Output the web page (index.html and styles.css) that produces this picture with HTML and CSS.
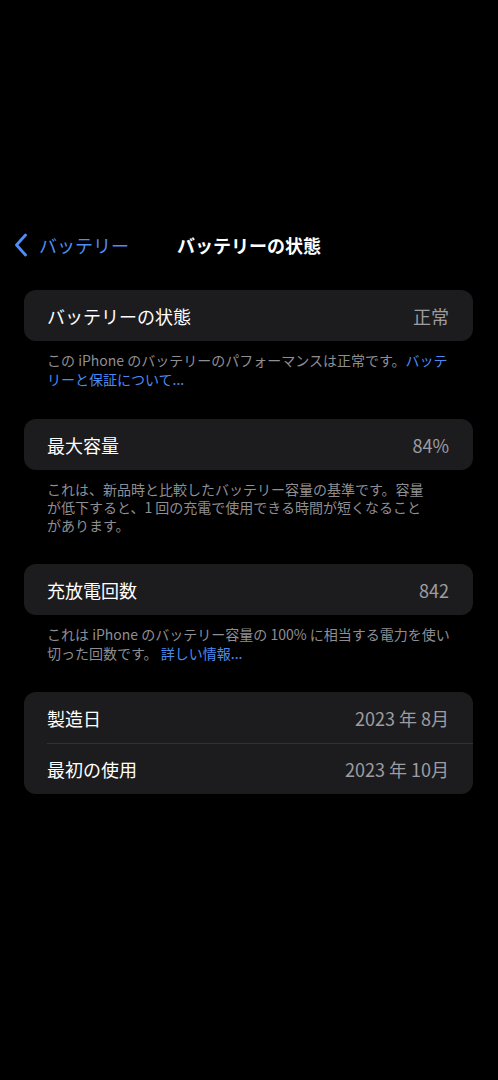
FILE: index.html
```html
<!DOCTYPE html>
<html lang="ja">
<head>
<meta charset="utf-8">
<title>バッテリーの状態</title>
<link rel="stylesheet" href="styles.css">
</head>
<body>
<div class="screen">
  <nav class="nav">
    <a class="back" href="#">
      <svg class="chev" width="14" height="24" viewBox="0 0 14 24"><path d="M11.5 2 L2.5 12 L11.5 22" fill="none" stroke="#4f8ef5" stroke-width="2.8" stroke-linecap="round" stroke-linejoin="round"/></svg>
      <span>バッテリー</span>
    </a>
    <h1 class="title">バッテリーの状態</h1>
    <div></div>
  </nav>

  <section class="group first">
    <div class="card">
      <div class="row"><span class="label">バッテリーの状態</span><span class="value">正常</span></div>
    </div>
    <p class="note">この iPhone のバッテリーのパフォーマンスは正常です。<a class="link" href="#">バッテ<br>リーと保証について...</a></p>
  </section>

  <section class="group">
    <div class="card">
      <div class="row"><span class="label">最大容量</span><span class="value">84%</span></div>
    </div>
    <p class="note tight">これは、新品時と比較したバッテリー容量の基準です。容量<br>が低下すると、1 回の充電で使用できる時間が短くなること<br>があります。</p>
  </section>

  <section class="group">
    <div class="card">
      <div class="row"><span class="label">充放電回数</span><span class="value">842</span></div>
    </div>
    <p class="note">これは iPhone のバッテリー容量の 100% に相当する電力を使い<br>切った回数です。 <a class="link" href="#">詳しい情報...</a></p>
  </section>

  <section class="group">
    <div class="card">
      <div class="row"><span class="label">製造日</span><span class="value">2023 年 8月</span></div>
      <div class="row sep"><span class="label">最初の使用</span><span class="value">2023 年 10月</span></div>
    </div>
  </section>
</div>
</body>
</html>
```

FILE: styles.css
```css
html, body {
  margin: 0;
  padding: 0;
  background: #000;
}
body {
  font-family: "Noto Sans CJK JP", "Noto Sans", sans-serif;
  color: #fff;
  width: 498px;
  height: 1080px;
  overflow: hidden;
}
.screen {
  padding-top: 228px;
}
.nav {
  display: grid;
  grid-template-columns: 1fr auto 1fr;
  align-items: center;
  height: 34px;
  margin-bottom: 28px;
}
.back {
  display: flex;
  align-items: center;
  gap: 11px;
  padding-left: 14px;
  color: #4f8ef5;
  text-decoration: none;
  font-size: 18px;
}
.chev {
  display: block;
}
.title {
  margin: 0;
  font-size: 18px;
  font-weight: 700;
  color: #fff;
}
.group {
  margin: 0 25px 30px 24px;
}
.group.first {
  margin-bottom: 31px;
}
.card {
  background: #1c1c1e;
  border-radius: 12px;
  overflow: hidden;
}
.row {
  display: flex;
  justify-content: space-between;
  align-items: center;
  height: 51px;
  padding: 0 24px 0 23px;
  position: relative;
}
.row.sep::before {
  content: "";
  position: absolute;
  left: 23px;
  right: 0;
  top: 0;
  height: 1px;
  background: #323236;
}
.label {
  font-size: 18px;
  color: #fff;
}
.value {
  font-size: 18px;
  color: #9c9ca1;
}
.note {
  margin: 0;
  padding: 10px 10px 0 23px;
  font-size: 14px;
  line-height: 18.5px;
  color: #8e8e93;
  white-space: nowrap;
}
.note.tight {
  line-height: 18px;
}
.link {
  color: #4a8af2;
  text-decoration: none;
}
```
